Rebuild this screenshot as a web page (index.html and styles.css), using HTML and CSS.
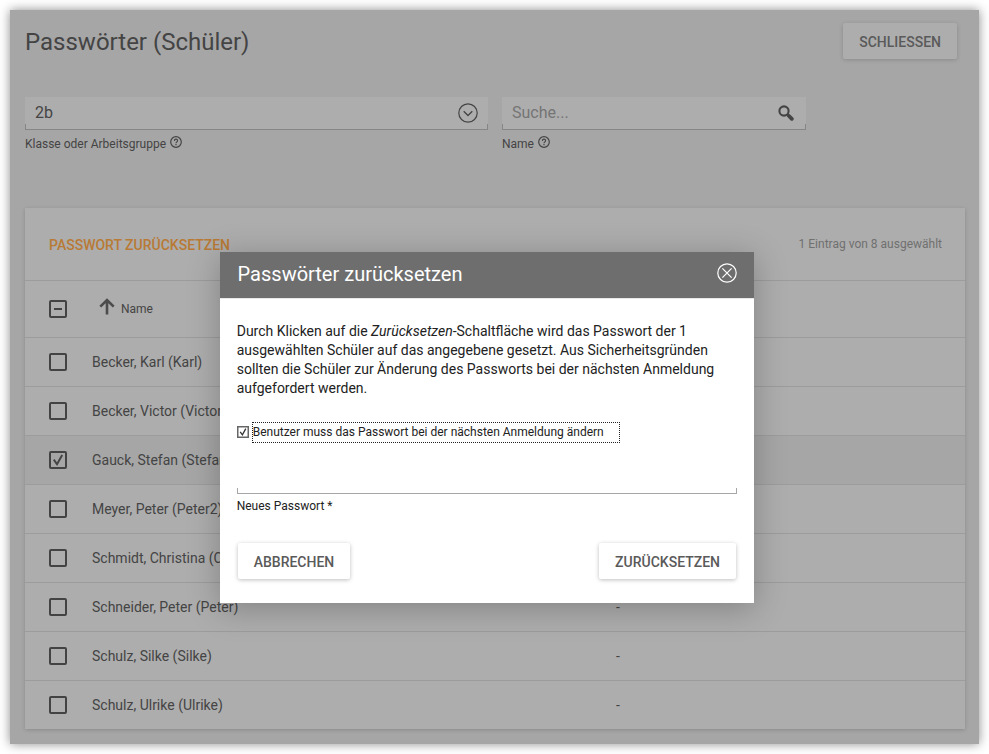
FILE: index.html
```html
<!DOCTYPE html>
<html lang="de">
<head>
<meta charset="utf-8">
<title>Passwörter (Schüler)</title>
<link rel="stylesheet" href="styles.css">
</head>
<body>
<svg width="0" height="0" class="defs">
  <symbol id="help" viewBox="0 0 12 12"><circle cx="6" cy="6" r="5.3" fill="none" stroke="currentColor" stroke-width="1.2"/><path d="M4.4 4.9C4.4 2.6 7.6 2.6 7.6 4.7C7.6 5.8 6 5.9 6 7.2" fill="none" stroke="currentColor" stroke-width="1.1"/><path d="M5.4 8h1.2v1.2H5.4z" fill="currentColor"/></symbol>
</svg>
<main class="frame">
  <header class="page-head">
    <h1>Passwörter (Schüler)</h1>
    <button class="btn btn-dim">SCHLIESSEN</button>
  </header>
  <section class="filters">
    <div class="filter filter-class">
      <div class="field"><span>2b</span>
        <svg width="20" height="20" viewBox="0 0 20 20" fill="none" stroke="currentColor"><circle cx="10" cy="10" r="9.2" stroke-width="1.2"/><path d="M5.7 8.3L10 12.5l4.3-4.2" stroke-width="1.3"/></svg>
      </div>
      <label>Klasse oder Arbeitsgruppe <svg class="help"><use href="#help"/></svg></label>
    </div>
    <div class="filter filter-name">
      <div class="field search"><span class="placeholder">Suche...</span>
        <svg width="16" height="16" viewBox="0 0 16 16" fill="none" stroke="currentColor"><circle cx="6" cy="6" r="4.6" stroke-width="2.1"/><path d="M9.2 9.2l1.8 1.8" stroke-width="2.4"/><path d="M11 11l2.8 2.8" stroke-width="3.8" stroke-linecap="round"/></svg>
      </div>
      <label>Name <svg class="help"><use href="#help"/></svg></label>
    </div>
  </section>
  <section class="card">
    <div class="toolbar"><strong>PASSWORT ZURÜCKSETZEN</strong><span>1 Eintrag von 8 ausgewählt</span></div>
    <div class="row row-head"><i class="check mixed"></i><svg class="arrow" width="16" height="17" viewBox="0 0 16 17" fill="none" stroke="currentColor" stroke-width="2.6"><path d="M8 16.5V2M1.3 8.6L8 2l6.7 6.6"/></svg><span>Name</span></div>
    <div class="row"><i class="check"></i><span class="name">Becker, Karl (Karl)</span></div>
    <div class="row"><i class="check"></i><span class="name">Becker, Victor (Victor)</span></div>
    <div class="row selected"><i class="check"><svg width="18" height="18" viewBox="0 0 18 18" fill="none" stroke="currentColor" stroke-width="2"><path d="M4.8 8.6l3.2 4.6L13.2 4"/></svg></i><span class="name">Gauck, Stefan (Stefan)</span></div>
    <div class="row"><i class="check"></i><span class="name">Meyer, Peter (Peter2)</span></div>
    <div class="row"><i class="check"></i><span class="name">Schmidt, Christina (Chr)</span></div>
    <div class="row"><i class="check"></i><span class="name">Schneider, Peter (Peter)</span><span>-</span></div>
    <div class="row"><i class="check"></i><span class="name">Schulz, Silke (Silke)</span><span>-</span></div>
    <div class="row"><i class="check"></i><span class="name">Schulz, Ulrike (Ulrike)</span><span>-</span></div>
  </section>
</main>
<div class="dialog" role="dialog">
  <div class="dialog-head"><h2>Passwörter zurücksetzen</h2>
    <svg width="20" height="20" viewBox="0 0 20 20" fill="none" stroke="currentColor"><circle cx="10" cy="10" r="9.2" stroke-width="1.2"/><path d="M5.4 5.4l9.2 9.2M14.6 5.4l-9.2 9.2" stroke-width="1.2"/></svg>
  </div>
  <div class="dialog-body">
    <p>Durch Klicken auf die <em>Zurücksetzen</em>-Schaltfläche wird das Passwort der 1<br>ausgewählten Schüler auf das angegebene gesetzt. Aus Sicherheitsgründen<br>sollten die Schüler zur Änderung des Passworts bei der nächsten Anmeldung<br>aufgefordert werden.</p>
    <div class="option">
      <svg width="12" height="12" viewBox="0 0 12 12" fill="none"><path d="M.75.75h10.5v10.5H.75z" stroke="#666" stroke-width="1.5"/><path d="M3.2 5.8l2.2 3L8.8 2.6" stroke="#333" stroke-width="1.3"/></svg>
      <span class="option-label">Benutzer muss das Passwort bei der nächsten Anmeldung ändern</span>
    </div>
    <div class="field password"></div>
    <label class="password-label">Neues Passwort *</label>
    <div class="actions"><button class="btn cancel">ABBRECHEN</button><button class="btn">ZURÜCKSETZEN</button></div>
  </div>
</div>
</body>
</html>
```
FILE: styles.css
```css
* { box-sizing: border-box; }
body { margin: 0; padding: 10px; height: 754px; overflow: hidden; background: #fff; font-family: Roboto, sans-serif; font-size: 14px; color: #444; position: relative; }
h1, h2, p { margin: 0; font-weight: 400; }
svg { display: block; flex: none; }
.defs { position: absolute; }

.frame { height: 734px; background: #a6a6a6; padding: 13px 14px 0 15px; box-shadow: 0 0 10px rgba(0, 0, 0, .45); }
.page-head { display: flex; justify-content: space-between; height: 74px; padding-right: 8px; }
h1 { font-size: 24px; line-height: 38px; }
.btn { height: 36px; padding: 2px 16px 0; border: 0; border-radius: 2px; background: #fff; box-shadow: 0 1px 4px rgba(0, 0, 0, .26); font: 500 14px/34px Roboto, sans-serif; color: #5a5a5a; white-space: nowrap; }
.btn-dim { background: #adadad; box-shadow: 0 1px 4px rgba(0, 0, 0, .17); }
.cancel { width: 112.5px; }

.filters { display: flex; gap: 14px; height: 111px; }
.filter-class { width: 463px; }
.filter-name { width: 304px; }
.field { height: 33px; padding: 0 10px 1px; display: flex; align-items: center; justify-content: space-between; font-size: 16px; line-height: 30px; background: linear-gradient(#868686, #868686) left bottom / 1px 6px no-repeat, linear-gradient(#868686, #868686) right bottom / 1px 6px no-repeat, linear-gradient(#868686, #868686) left bottom / 100% 1px no-repeat, #adadad; }
.search { padding-right: 12px; }
.placeholder { color: #757575; }
label { display: flex; align-items: center; gap: 4px; font-size: 12px; line-height: 14px; margin-top: 7px; }
.help { width: 12px; height: 12px; margin-top: -5px; }

.card { width: 940px; background: #adadad; box-shadow: 0 1px 4px rgba(0, 0, 0, .17); }
.toolbar { height: 72px; padding: 1px 23px 0 24px; display: flex; align-items: center; justify-content: space-between; }
.toolbar strong { font-weight: 500; color: #b87a35; }
.toolbar span { font-size: 12px; color: #707070; margin-top: -2px; }
.row { height: 49px; padding-left: 24px; border-top: 1px solid #9c9c9c; display: flex; align-items: center; }
.row-head { height: 57px; font-size: 12px; }
.selected { background: #a6a6a6; }
.check { width: 18px; height: 18px; border: 2px solid #434343; border-radius: 2px; display: grid; place-items: center; }
.check svg { margin: -2px; }
.mixed::after { content: ""; width: 8px; height: 2px; background: #434343; }
.arrow { margin: -6px 6px 0 32px; color: #4c4c4c; }
.name { width: 549px; padding-left: 25px; }

.dialog { position: absolute; left: 220px; top: 252px; width: 534px; height: 351px; background: #fff; color: #222; box-shadow: 0 5px 30px rgba(0, 0, 0, .25); }
.dialog-head { height: 46px; padding: 0 17px 4px 17.6px; display: flex; align-items: center; justify-content: space-between; background: #6e6e6e; color: #fff; }
h2 { font-size: 20px; line-height: 24px; padding-top: 2px; }
.dialog-body { padding: 24px 17px 0 16.7px; border-top: 1px solid #e8e8e8; }
.dialog-body p { line-height: 19px; white-space: nowrap; margin-top: -1px; }
.option { display: flex; align-items: center; gap: 3px; margin-top: 24px; font-size: 12px; }
.option svg { margin-top: -1px; }
.option-label { width: 368px; height: 21px; line-height: 19px; border: 1px dotted #222; white-space: nowrap; }
.password { height: 31px; margin-top: 20px; background: linear-gradient(#a6a6a6, #a6a6a6) left bottom / 1px 6px no-repeat, linear-gradient(#a6a6a6, #a6a6a6) right bottom / 1px 6px no-repeat, linear-gradient(#a6a6a6, #a6a6a6) left bottom / 100% 1px no-repeat; }
.password-label { margin-top: 5px; }
.actions { display: flex; justify-content: space-between; margin: 30px 1px 0; }
```
